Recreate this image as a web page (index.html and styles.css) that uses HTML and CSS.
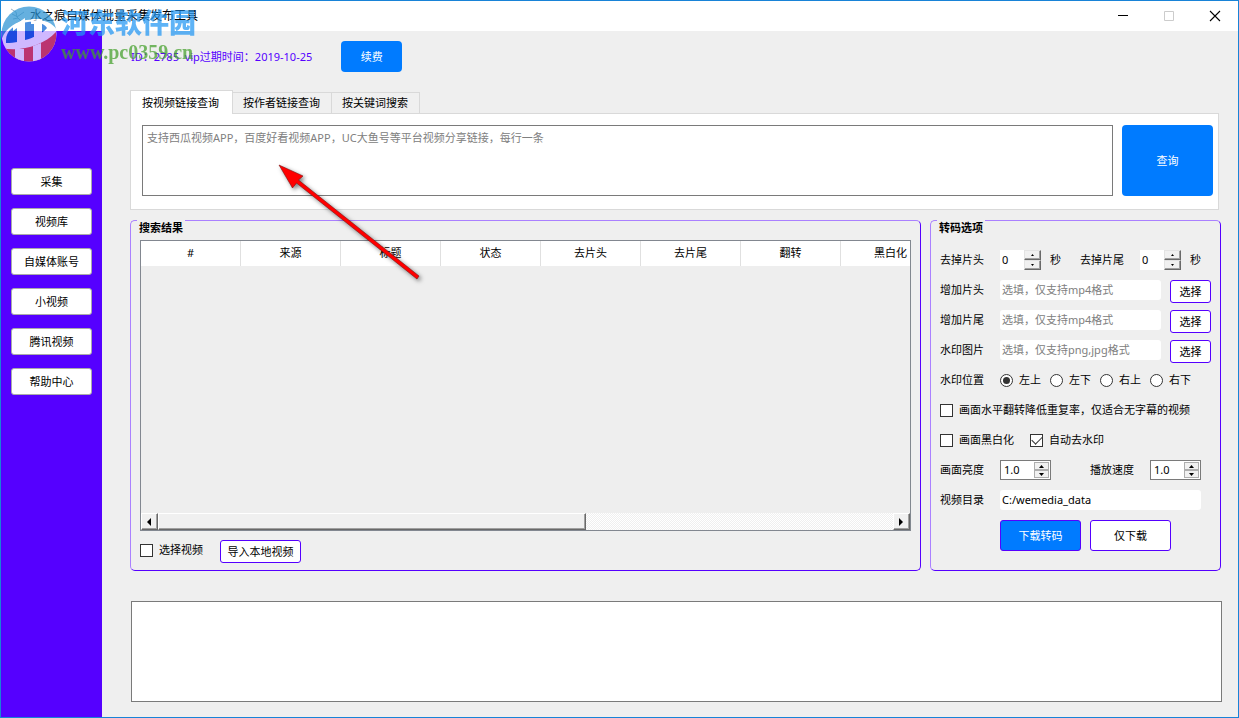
FILE: index.html
```html
<!DOCTYPE html>
<html lang="zh-CN">
<head>
<meta charset="utf-8">
<title>水之痕自媒体批量采集发布工具</title>
<link rel="stylesheet" href="styles.css">
</head>
<body>
<div class="window">
  <header class="titlebar">
    <svg class="app-icon" width="16" height="16" viewBox="0 0 16 16" fill="none" stroke="#9db4c4" aria-hidden="true"><path d="M1 1l5 3 1 5 7-5M2 6l4 2 5 5M3 11l5-1"/></svg>
    <h1 class="title">水之痕自媒体批量采集发布工具</h1>
    <div class="win-buttons">
      <button class="win-btn" aria-label="最小化"><svg width="12" height="12" viewBox="0 0 12 12"><path d="M1 5.500h10" stroke="#000"/></svg></button>
      <button class="win-btn" aria-label="最大化" disabled><svg width="12" height="12" viewBox="0 0 12 12"><path d="M1.500 1.500h9v9h-9z" stroke="#ccc" fill="none"/></svg></button>
      <button class="win-btn" aria-label="关闭"><svg width="12" height="12" viewBox="0 0 12 12"><path d="M1 1l10 10M11 1L1 11" stroke="#000" stroke-width="1.100"/></svg></button>
    </div>
  </header>
  <div class="body">
    <nav class="sidebar">
      <button class="nav-btn">采集</button>
      <button class="nav-btn">视频库</button>
      <button class="nav-btn">自媒体账号</button>
      <button class="nav-btn">小视频</button>
      <button class="nav-btn">腾讯视频</button>
      <button class="nav-btn">帮助中心</button>
    </nav>
    <main class="main">
      <div class="account">
        <span class="account-info">ID：2785&nbsp; vip过期时间：2019-10-25</span>
        <button class="primary renew">续费</button>
      </div>
      <section class="search">
        <div class="tabs" role="tablist">
          <button class="tab active" role="tab" aria-selected="true">按视频链接查询</button>
          <button class="tab" role="tab">按作者链接查询</button>
          <button class="tab" role="tab">按关键词搜索</button>
        </div>
        <div class="tab-panel" role="tabpanel">
          <textarea class="links" aria-label="视频链接" placeholder="支持西瓜视频APP，百度好看视频APP，UC大鱼号等平台视频分享链接，每行一条"></textarea>
          <button class="primary query">查询</button>
        </div>
      </section>
      <div class="groups">
        <fieldset class="group results">
          <legend class="legend">搜索结果</legend>
          <div class="results-body">
            <div class="table-box">
              <div class="table-view">
                <table class="table">
                  <thead><tr><th>#</th><th>来源</th><th>标题</th><th>状态</th><th>去片头</th><th>去片尾</th><th>翻转</th><th>黑白化</th></tr></thead>
                </table>
              </div>
              <div class="scrollbar">
                <button class="scroll-btn" aria-label="向左"><svg width="5" height="8" viewBox="0 0 5 8"><path d="M4 0v8L0 4z"/></svg></button>
                <div class="thumb"></div>
                <div class="track"></div>
                <button class="scroll-btn" aria-label="向右"><svg width="5" height="8" viewBox="0 0 5 8"><path d="M0 0v8l4-4z"/></svg></button>
              </div>
            </div>
            <div class="results-foot">
              <label class="check"><input type="checkbox">选择视频</label>
              <button class="outline import">导入本地视频</button>
            </div>
          </div>
        </fieldset>
        <fieldset class="group options">
          <legend class="legend">转码选项</legend>
          <div class="options-body">
            <div class="row">
              <label class="name" for="head">去掉片头</label>
              <span class="spin raised"><input id="head" value="0"><span class="steps"><button aria-label="加"><svg width="3" height="2" viewBox="0 0 3 2"><path d="M0 2h3L1.500 0z"/></svg></button><button aria-label="减"><svg width="3" height="2" viewBox="0 0 3 2"><path d="M0 0h3L1.500 2z"/></svg></button></span></span>
              <span class="unit">秒</span>
              <label class="name" for="tail">去掉片尾</label>
              <span class="spin raised"><input id="tail" value="0"><span class="steps"><button aria-label="加"><svg width="3" height="2" viewBox="0 0 3 2"><path d="M0 2h3L1.500 0z"/></svg></button><button aria-label="减"><svg width="3" height="2" viewBox="0 0 3 2"><path d="M0 0h3L1.500 2z"/></svg></button></span></span>
              <span class="unit">秒</span>
            </div>
            <div class="row"><label class="name" for="addhead">增加片头</label><input class="field" id="addhead" placeholder="选填，仅支持mp4格式"><button class="outline pick">选择</button></div>
            <div class="row"><label class="name" for="addtail">增加片尾</label><input class="field" id="addtail" placeholder="选填，仅支持mp4格式"><button class="outline pick">选择</button></div>
            <div class="row"><label class="name" for="mark">水印图片</label><input class="field" id="mark" placeholder="选填，仅支持png,jpg格式"><button class="outline pick">选择</button></div>
            <div class="row">
              <span class="name">水印位置</span>
              <label class="check radio"><input type="radio" name="pos" checked>左上</label>
              <label class="check radio"><input type="radio" name="pos">左下</label>
              <label class="check radio"><input type="radio" name="pos">右上</label>
              <label class="check radio"><input type="radio" name="pos">右下</label>
            </div>
            <div class="row"><label class="check"><input type="checkbox">画面水平翻转降低重复率，仅适合无字幕的视频</label></div>
            <div class="row"><label class="check gray"><input type="checkbox">画面黑白化</label><label class="check"><input type="checkbox" checked>自动去水印</label></div>
            <div class="row">
              <label class="name" for="light">画面亮度</label>
              <span class="spin boxed"><input id="light" value="1.0"><span class="steps"><button aria-label="加"><svg width="5" height="3" viewBox="0 0 5 3"><path d="M0 3h5L2.500 0z"/></svg></button><button aria-label="减"><svg width="5" height="3" viewBox="0 0 5 3"><path d="M0 0h5L2.500 3z"/></svg></button></span></span>
              <label class="name speed" for="speed">播放速度</label>
              <span class="spin boxed"><input id="speed" value="1.0"><span class="steps"><button aria-label="加"><svg width="5" height="3" viewBox="0 0 5 3"><path d="M0 3h5L2.500 0z"/></svg></button><button aria-label="减"><svg width="5" height="3" viewBox="0 0 5 3"><path d="M0 0h5L2.500 3z"/></svg></button></span></span>
            </div>
            <div class="row"><label class="name" for="dir">视频目录</label><input class="field dir" id="dir" value="C:/wemedia_data"></div>
            <div class="actions"><button class="outline action filled">下载转码</button><button class="outline action">仅下载</button></div>
          </div>
        </fieldset>
      </div>
      <textarea class="log" aria-label="日志" readonly></textarea>
    </main>
  </div>
  <svg class="arrow" width="170" height="140" viewBox="0 0 170 140" aria-hidden="true">
    <path d="M13 9l24 11-4.500 4L153 120l-2 3L30.500 27l-4 5z" fill="#f00" stroke="#7d1010" stroke-width=".6"/>
  </svg>
  <div class="watermark" aria-hidden="true">
    <svg class="mark-logo" width="56" height="56" viewBox="0 0 56 56">
      <defs><clipPath id="disc"><circle cx="28" cy="28" r="27.500"/></clipPath></defs>
      <g clip-path="url(#disc)">
        <path d="M0 0h56v56H0z" fill="#fff"/>
        <path d="M0 0h56v24C51 15 38 12 25 14 10 17 2 26 0 36z" fill="#2b93d4"/>
        <path d="M5 34c0-9 9-17 22-18 9-1 17 2 19 6-5 7-24 15-41 15z" fill="#0864d4"/>
        <path d="M12 20l12-8v26h-8V22l-4 3zM30 13h11v23h-8V18h-3z" fill="#fff"/>
        <path d="M1 42c18 4 41-2 54-16v30H0z" fill="#e3483b"/>
        <path d="M14 43l9 0v13h-9zM32 40l8-3v19h-8z" fill="#fff"/>
      </g>
    </svg>
    <div class="mark-text"><span class="mark-name">河东软件园</span><span class="mark-url">www.pc0359.cn</span></div>
  </div>
</div>
</body>
</html>
```
FILE: styles.css
```css
* { box-sizing: border-box; }

body {
  margin: 0;
  font: 11px/20px "Noto Sans", "Noto Sans CJK SC", sans-serif;
  color: #000;
}

button, input, textarea {
  font: inherit;
  color: inherit;
  margin: 0;
  padding: 0;
  border: 0;
  border-radius: 0;
  outline: 0;
}

button { background: #fff; white-space: nowrap; }
svg { display: block; }

.window {
  position: relative;
  display: flex;
  flex-direction: column;
  min-height: 100vh;
  border: 1px solid #1883d7;
  background: #efefef;
}

.titlebar {
  display: flex;
  align-items: center;
  height: 30px;
  padding-left: 9px;
  background: #fff;
}
.app-icon { margin-right: 4px; }
.title { margin: 0; font-size: 12px; font-weight: 400; }
.win-buttons { display: flex; margin-left: auto; }
.win-btn {
  display: grid;
  place-items: center;
  width: 46px;
  height: 28px;
}

.body { display: flex; flex: 1; }

.sidebar {
  display: flex;
  flex-direction: column;
  gap: 13px;
  flex: 0 0 101px;
  padding: 137px 10px 0;
  background: #50f;
}
.nav-btn {
  height: 27px;
  border: 1px solid #aaa;
  border-radius: 3px;
}

.main {
  display: flex;
  flex-direction: column;
  flex: 1;
  min-width: 0;
  padding: 10px 16px 15px 28px;
}

.account { display: flex; align-items: center; gap: 29px; padding-left: 1px; }
.account-info { color: #50f; }
.primary {
  border-radius: 4px;
  background: #007bff;
  color: #fff;
}
.renew { width: 61px; height: 31px; }

.search { margin: 18px 3px 0 0; }
.tabs { display: flex; align-items: flex-end; height: 24px; }
.tab {
  height: 22px;
  padding: 0 11px 0 10px;
  border: 1px solid #d9d9d9;
  border-left: 0;
  background: #f0f0f0;
}
.tab.active {
  position: relative;
  height: 24px;
  padding: 0 13px 0 11px;
  border-left: 1px solid #d9d9d9;
  border-bottom: 0;
  background: #fff;
}
.tab-panel {
  display: flex;
  gap: 9px;
  margin-top: -1px;
  padding: 11px 5px 13px 11px;
  border: 1px solid #d9d9d9;
  background: #fff;
}
.links {
  flex: 1;
  height: 71px;
  padding: 2px 4px;
  border: 1px solid #7a7a7a;
  background: #fff;
  resize: none;
}
::placeholder { color: #808080; opacity: 1; }
.query { flex: 0 0 91px; }

.groups { display: flex; flex: 1; gap: 9px; margin: 10px 1px 0 0; }
.group {
  display: block;
  min-width: 0;
  margin: 0;
  padding: 0 9px;
  border: 1px solid;
  border-color: #aa80ff #50f #50f #aa80ff;
  border-radius: 5px;
}
.results { display: flex; flex-direction: column; flex: 1; }
.options { flex: 0 0 291px; }
.legend {
  float: left;
  align-self: flex-start;
  margin: -1px 0 0 -3px;
  padding: 0 2px;
  line-height: 16px;
  font-weight: 700;
  background: #efefef;
}

.results-body { display: flex; flex-direction: column; flex: 1; padding-top: 4px; }
.table-box {
  display: flex;
  flex-direction: column;
  flex: 1;
  border: 1px solid #828790;
  background: #eee;
}
.table-view { flex: 1 0 240px; overflow: hidden; contain: inline-size; background: linear-gradient(#fff 25px, #eee 25px); }
.table { width: 800px; table-layout: fixed; border-collapse: separate; border-spacing: 0; }
.table th {
  height: 25px;
  padding: 0 0 1px;
  border-right: 1px solid #e0e0e0;
  font-weight: 400;
  line-height: 24px;
}
.scrollbar { display: flex; height: 17px; }
.scroll-btn, .thumb {
  border: 1px solid;
  border-color: #fff #696969 #696969 #fff;
  box-shadow: inset -1px -1px #a0a0a0;
  background: #f0f0f0;
}
.scroll-btn { display: grid; place-items: center; flex: 0 0 17px; }
.thumb { flex: 427; }
.track { flex: 308; background: repeating-conic-gradient(#fff 0 25%, #efefef 0 50%) 0 0 / 2px 2px; }
.results-foot { display: flex; gap: 17px; padding: 9px 0 7px; }

.outline {
  height: 23px;
  padding: 0 6px;
  border: 1px solid #50f;
  border-radius: 3px;
}
.import { width: 81px; }

.options-body { clear: both; padding-top: 14px; }
.row { display: flex; height: 30px; }
.name { flex: 0 0 60px; }
.field {
  flex: 1;
  min-width: 0;
  height: 20px;
  padding: 0 2px;
  border-radius: 3px;
  background: #fff;
}
.pick { width: 41px; margin-left: 9px; }
.dir { margin-right: 10px; }
.unit { flex: 0 0 39px; padding-left: 9px; }
.unit:last-child { flex-basis: 20px; }

.check { display: flex; align-items: flex-start; white-space: nowrap; }
.check input {
  appearance: none;
  display: grid;
  place-items: center;
  width: 13px;
  height: 13px;
  margin: 4px 6px 0 0;
  border: 1px solid #333;
  background: #fff;
}
.check input[type="checkbox"]:checked::before {
  content: "";
  width: 9px;
  height: 5px;
  margin-bottom: 3px;
  border: solid #333;
  border-width: 0 0 1px 1px;
  transform: rotate(-45deg);
}
.check input[type="radio"] { border-radius: 50%; }
.check input[type="radio"]:checked::before {
  content: "";
  width: 7px;
  height: 7px;
  border-radius: 50%;
  background: #333;
}
.radio { width: 50px; }
.gray { width: 90px; }

.spin { display: flex; flex: none; height: 20px; background: #fff; }
.spin input { flex: 1; width: 0; padding-left: 2px; background: none; }
.steps { display: flex; flex-direction: column; flex: 0 0 17px; }
.steps button { display: grid; place-items: center; flex: 1; min-height: 0; background: #f0f0f0; }
.raised { width: 41px; }
.raised .steps button {
  border: 1px solid;
  border-color: #e3e3e3 #696969 #696969 #e3e3e3;
  box-shadow: inset -1px -1px #a0a0a0;
}
.boxed { width: 51px; padding: 1px; border: 1px solid #7a7a7a; }
.boxed .steps { flex-basis: 15px; }
.boxed input { line-height: 16px; }
.boxed .steps button { border: 1px solid #adadad; }
.speed { margin-left: 39px; }
.actions { display: flex; gap: 9px; padding: 0 0 19px 60px; }
.action { width: 81px; height: 31px; }
.filled { background: #007bff; color: #fff; }

.log {
  height: 101px;
  margin: 30px 0 0 1px;
  border: 1px solid #7a7a7a;
  background: #fff;
  resize: none;
}

.arrow {
  position: absolute;
  left: 265px;
  top: 155px;
  filter: drop-shadow(2px 2px 2px rgba(0, 0, 0, .5));
  pointer-events: none;
}

.watermark {
  position: absolute;
  left: 0;
  top: 5px;
  display: flex;
  gap: 4px;
  opacity: .72;
  pointer-events: none;
}
.mark-text { display: flex; flex-direction: column; white-space: nowrap; }
.mark-name {
  font: 900 27px/32px "Noto Sans CJK SC", sans-serif;
  color: #2196f3;
}
.mark-url {
  font: 700 20px/28px "Liberation Serif", serif;
  color: #43a02a;
}
```
